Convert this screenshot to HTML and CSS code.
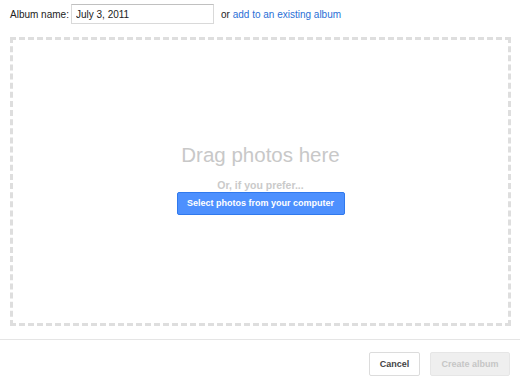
FILE: index.html
```html
<!DOCTYPE html>
<html lang="en">
<head>
    <meta charset="UTF-8">
    <title>Create album</title>
    <link rel="stylesheet" href="styles.css">
</head>
<body>

    <div class="album-row">
        <label for="albumName">Album name:</label>
        <input type="text" id="albumName" value="July 3, 2011">
        <span class="or">or <a href="#">add to an existing album</a></span>
    </div>

    <div class="dropzone">
        <div class="drag-title">Drag photos here</div>
        <div class="prefer">Or, if you prefer...</div>
        <button class="btn btn-blue">Select photos from your computer</button>
    </div>

    <div class="footer">
        <button class="btn btn-white">Cancel</button>
        <button class="btn btn-disabled" disabled>Create album</button>
    </div>

</body>
</html>
```

FILE: styles.css
```css
html, body {
    margin: 0;
    padding: 0;
    font-family: "Liberation Sans", Arial, sans-serif;
    background: #fff;
}

.album-row {
    display: flex;
    align-items: center;
    padding: 4px 10px 0 10px;
    height: 20px;
    font-size: 10px;
    color: #222;
}

.album-row label {
    width: 57px;
    margin-right: 4px;
    white-space: nowrap;
}

.album-row input {
    box-sizing: border-box;
    width: 143px;
    height: 20px;
    border: 1px solid #d9d9d9;
    border-top-color: #c0c0c0;
    padding: 1px 4px;
    font-family: inherit;
    font-size: 10px;
    color: #222;
    margin: 0;
}

.or {
    margin-left: 7px;
}

.or a {
    color: #2a6fd6;
    text-decoration: none;
}

.dropzone {
    box-sizing: border-box;
    margin: 13px 9px 0 10px;
    height: 289px;
    border: 3px dashed #dedede;
    display: flex;
    flex-direction: column;
    align-items: center;
    justify-content: center;
    padding-bottom: 6px;
}

.drag-title {
    font-size: 20.5px;
    color: #c8c8c8;
    line-height: 24px;
}

.prefer {
    font-size: 10.5px;
    font-weight: bold;
    color: #cacaca;
    margin-top: 12px;
    line-height: 12px;
}

.btn {
    box-sizing: border-box;
    font-family: inherit;
    font-size: 9px;
    font-weight: bold;
    height: 24px;
    padding: 0;
    border-radius: 2px;
    white-space: nowrap;
    cursor: pointer;
}

.btn-blue {
    margin-top: 1px;
    width: 168px;
    height: 23px;
    background: #4d90fe;
    border: 1px solid #3079ed;
    color: #fff;
}

.footer {
    margin-top: 13px;
    border-top: 1px solid #e5e5e5;
    display: flex;
    justify-content: flex-end;
    gap: 10px;
    padding: 12px 10px 0 0;
}

.btn-white {
    width: 51px;
    background: #fff;
    border: 1px solid #dcdcdc;
    color: #444;
}

.btn-disabled {
    width: 80px;
    background: #efefef;
    border: 1px solid #e6e6e6;
    color: #c6c6c6;
    cursor: default;
}
```
